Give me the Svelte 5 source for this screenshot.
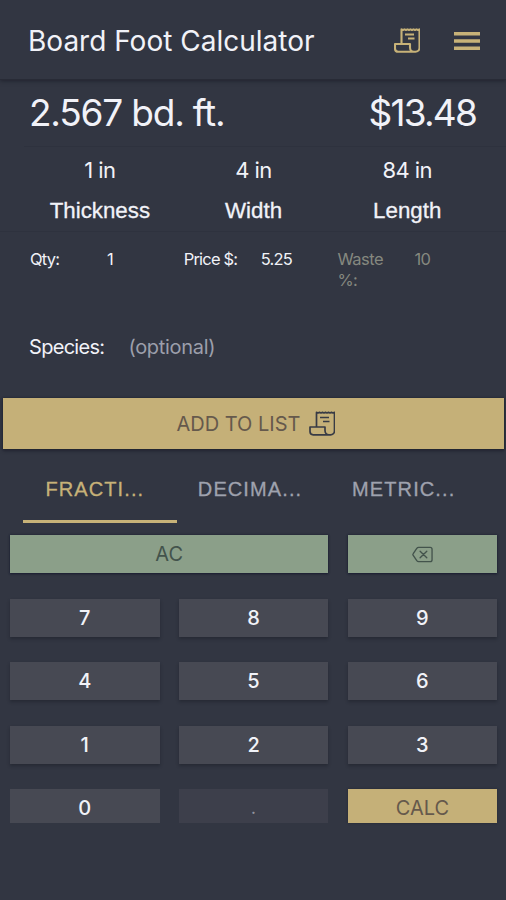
<script lang="ts">
  let tab = $state('FRACTI...');

  const tabs = ['FRACTI...', 'DECIMA...', 'METRIC...'];

  const dimensions = [
    { value: '1 in', label: 'Thickness' },
    { value: '4 in', label: 'Width' },
    { value: '84 in', label: 'Length' }
  ];

  const fields = [
    { label: 'Qty:', value: '1', muted: false },
    { label: 'Price $:', value: '5.25', muted: false },
    { label: 'Waste %:', value: '10', muted: true }
  ];

  const digits = ['7', '8', '9', '4', '5', '6', '1', '2', '3'];
</script>

{#snippet receipt()}
  <svg class="receipt" viewBox="0 0 26 25" fill="none" stroke="currentColor" stroke-linejoin="round">
    <path d="M7.5 16V1.400l1.500.6 1.500-.6 1.500.6 1.500-.6 1.500.6 1.500-.6 1.500.6 1.500-.6 1.500.6 1.500-.6 1.500.6 1.500-.6v18.400a4 4 0 0 1-4 4H4.200c-2.300 0-3.200-1.300-3.200-3.200V16h15v3.500c0 2.400 1.700 4.300 4 4.300" />
    <path d="M11 6.500h9M14 10.500h6.500" />
  </svg>
{/snippet}

<div class="app">
  <header>
    <h1>Board Foot Calculator</h1>
    <button class="icon-button" aria-label="List">{@render receipt()}</button>
    <button class="icon-button menu" aria-label="Menu">
      <svg viewBox="0 0 26 18" width="26" height="18" fill="currentColor">
        <path d="M0 0h26v3.400H0zM0 7.300h26v3.400H0zM0 14.600h26V18H0z" />
      </svg>
    </button>
  </header>

  <section class="result">
    <span class="volume">2.567 bd. ft.</span>
    <span class="price">$13.48</span>
  </section>

  <section class="dimensions">
    {#each dimensions as dim}
      <div class="dimension">
        <span class="dim-value">{dim.value}</span>
        <span class="dim-label">{dim.label}</span>
      </div>
    {/each}
  </section>

  <section class="fields">
    {#each fields as field}
      <div class="field" class:muted={field.muted}>
        <span class="field-label">{field.label}</span>
        <span class="field-value">{field.value}</span>
      </div>
    {/each}
  </section>

  <section class="species">
    <span class="species-label">Species:</span>
    <span class="species-value">(optional)</span>
  </section>

  <button class="add">
    <span>ADD TO LIST</span>
    {@render receipt()}
  </button>

  <nav>
    {#each tabs as name}
      <button class="tab" class:active={tab === name} onclick={() => (tab = name)}>{name}</button>
    {/each}
  </nav>

  <div class="keypad">
    <button class="key green wide">AC</button>
    <button class="key green" aria-label="Backspace">
      <svg viewBox="0 0 22 17" width="21" height="17" fill="none" stroke="currentColor" stroke-width="1.4" stroke-linejoin="round" stroke-linecap="round">
        <path d="M7 1h12a2 2 0 0 1 2 2v11a2 2 0 0 1-2 2H7a2.500 2.500 0 0 1-2-1L1.300 9.500a1.600 1.600 0 0 1 0-2L5 2a2.500 2.500 0 0 1 2-1z" />
        <path d="M8.500 5l7 7M15.500 5l-7 7" />
      </svg>
    </button>
    {#each digits as digit}
      <button class="key">{digit}</button>
    {/each}
    <button class="key last">0</button>
    <button class="key last dot" disabled>.</button>
    <button class="key last calc">CALC</button>
  </div>
</div>

<style>
  :global(body) {
    background: #323642;
  }

  .app {
    box-sizing: border-box;
    width: 506px;
    height: 900px;
    overflow: hidden;
    background: #323642;
    color: #f1f2f8;
    font-family: Inter, 'Liberation Sans', sans-serif;
  }

  button {
    margin: 0;
    padding: 0;
    border: 0;
    border-radius: 0;
    background: none;
    color: inherit;
    font: inherit;
  }

  header {
    box-sizing: border-box;
    display: flex;
    align-items: center;
    height: 80px;
    padding: 2px 26px 0 28px;
    border-bottom: 1px solid #282b36;
    box-shadow: 0 1px 4px rgba(20, 22, 32, 0.6);
  }

  h1 {
    flex: 1;
    margin: 0;
    padding-top: 1px;
    font-size: 28px;
    font-weight: 400;
    letter-spacing: 0;
    white-space: nowrap;
  }

  .icon-button {
    display: flex;
    color: #c7b278;
  }

  .menu {
    margin-left: 34px;
  }

  .receipt {
    width: 26px;
    height: 25px;
    stroke-width: 2.1;
  }

  .result {
    box-sizing: border-box;
    display: flex;
    justify-content: space-between;
    height: 67px;
    margin-left: 24px;
    padding: 10px 30px 0 5px;
    border-bottom: 1px solid #2e323e;
    font-size: 37px;
    line-height: 46px;
    white-space: nowrap;
  }

  .volume {
    letter-spacing: -1.200px;
  }

  .price {
    letter-spacing: -1.800px;
  }

  .dimensions {
    box-sizing: border-box;
    display: grid;
    grid-template-columns: repeat(3, 153.700px);
    height: 85px;
    padding-left: 23px;
    border-bottom: 1px solid #2e323e;
  }

  .dimension {
    display: flex;
    flex-direction: column;
    align-items: center;
    padding-top: 8px;
  }

  .dim-value {
    font-size: 22px;
    line-height: 30px;
    letter-spacing: -0.600px;
  }

  .dim-label {
    margin-top: 11px;
    font-family: 'Liberation Sans', Arial, sans-serif;
    font-size: 22.300px;
    line-height: 30px;
    -webkit-text-stroke: 0.300px currentColor;
  }

  .fields {
    display: grid;
    grid-template-columns: repeat(3, 153.700px);
    height: 88px;
    padding-left: 23px;
  }

  .field {
    display: grid;
    grid-template-columns: 77px 1fr;
    padding: 17px 0 0 7px;
    font-size: 16.500px;
    line-height: 21px;
    letter-spacing: -0.800px;
  }

  .field-label {
    max-width: 60px;
  }

  .muted {
    color: #85887f;
    letter-spacing: -0.500px;
  }

  .species {
    display: flex;
    align-items: center;
    gap: 24px;
    height: 54px;
    margin-bottom: 24px;
    padding-left: 29px;
    font-size: 20px;
  }

  .species-label {
    letter-spacing: -0.700px;
  }

  .species-value {
    color: #9c9fab;
    letter-spacing: -0.300px;
  }

  .add {
    display: flex;
    align-items: center;
    justify-content: center;
    gap: 9px;
    width: 501px;
    height: 51px;
    margin-left: 3px;
    padding-left: 5px;
    background: #c5b078;
    box-shadow: 0 0 2px #1e2230, 0 2px 3px rgba(20, 22, 32, 0.5);
    color: #65594c;
    font-size: 20px;
  }

  .add .receipt {
    color: #383b45;
    stroke-width: 1.7;
  }

  nav {
    display: grid;
    grid-template-columns: repeat(3, 153.700px);
    height: 74px;
    padding-left: 23px;
  }

  .tab {
    padding: 9px 7px 0 0;
    border-bottom: 3px solid transparent;
    color: #9fa2ae;
    font-family: 'Liberation Sans', Arial, sans-serif;
    font-size: 20px;
    letter-spacing: 1.100px;
    -webkit-text-stroke: 0.300px currentColor;
  }

  .active {
    padding-right: 10px;
    border-bottom-color: #c7b278;
    color: #c7b278;
  }

  .keypad {
    display: grid;
    grid-template-columns: repeat(3, 149.500px);
    grid-template-rows: repeat(4, 38px) 34px;
    column-gap: 19.300px;
    row-gap: 25.500px;
    padding: 12px 0 0 10px;
  }

  .key {
    display: flex;
    align-items: center;
    justify-content: center;
    background: #474953;
    box-shadow: 0 2px 3px rgba(24, 26, 36, 0.45);
    font-size: 20px;
    font-weight: 500;
  }

  .wide {
    grid-column: span 2;
  }

  .green {
    background: #8b9f89;
    box-shadow: 0 0 2px #1c2032, 0 1px 2px #1c2032;
    color: #43534c;
    font-weight: 400;
  }

  .last {
    box-shadow: none;
    padding-top: 3px;
  }

  .dot {
    background: #3d3f4b;
    color: #92949e;
    font-size: 16px;
  }

  .calc {
    background: #c5b078;
    box-shadow: 0 0 2px #232633;
    color: #65594c;
    font-weight: 400;
  }
</style>
